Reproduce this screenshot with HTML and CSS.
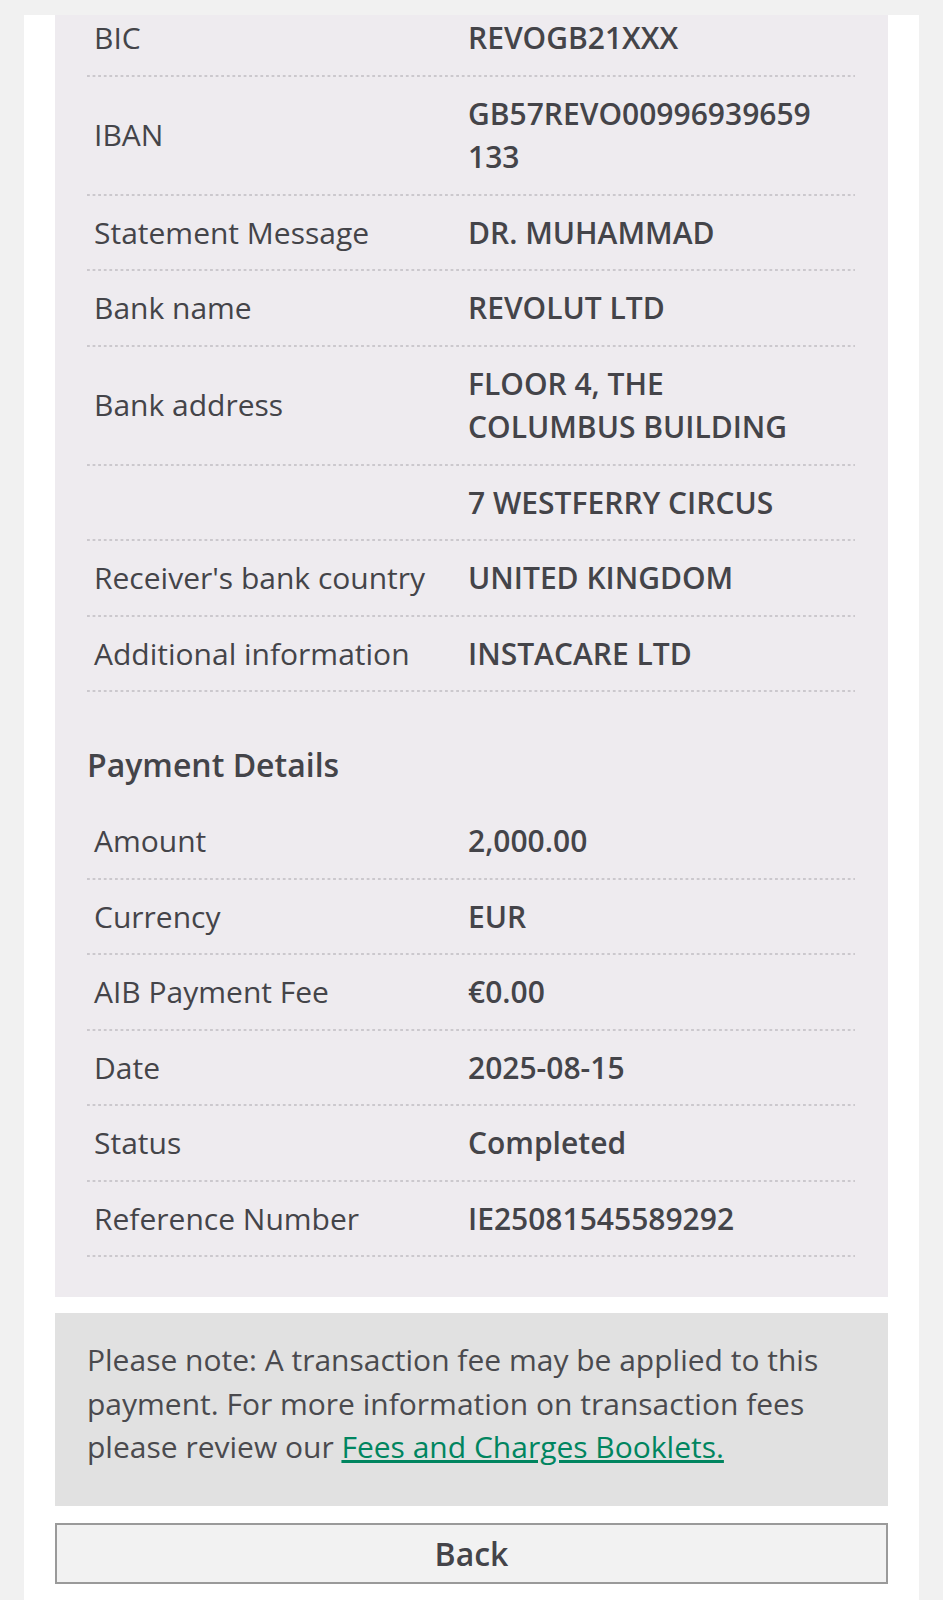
FILE: index.html
```html
<!DOCTYPE html>
<html lang="en">
<head>
<meta charset="utf-8">
<title>Payment Details</title>
<link rel="stylesheet" href="styles.css">
</head>
<body>
<div class="card">
  <section class="panel">
    <div class="list">
      <div class="row"><div class="label">BIC</div><div class="value">REVOGB21XXX</div></div>
      <div class="row"><div class="label">IBAN</div><div class="value break">GB57REVO00996939659133</div></div>
      <div class="row"><div class="label">Statement Message</div><div class="value">DR. MUHAMMAD</div></div>
      <div class="row"><div class="label">Bank name</div><div class="value">REVOLUT LTD</div></div>
      <div class="row"><div class="label">Bank address</div><div class="value">FLOOR 4, THE COLUMBUS BUILDING</div></div>
      <div class="row"><div class="label"></div><div class="value">7 WESTFERRY CIRCUS</div></div>
      <div class="row"><div class="label">Receiver's bank country</div><div class="value">UNITED KINGDOM</div></div>
      <div class="row"><div class="label">Additional information</div><div class="value">INSTACARE LTD</div></div>
    </div>
    <h2 class="heading">Payment Details</h2>
    <div class="list">
      <div class="row"><div class="label">Amount</div><div class="value">2,000.00</div></div>
      <div class="row"><div class="label">Currency</div><div class="value">EUR</div></div>
      <div class="row"><div class="label">AIB Payment Fee</div><div class="value">€0.00</div></div>
      <div class="row"><div class="label">Date</div><div class="value">2025-08-15</div></div>
      <div class="row"><div class="label">Status</div><div class="value">Completed</div></div>
      <div class="row"><div class="label">Reference Number</div><div class="value">IE25081545589292</div></div>
    </div>
  </section>
  <div class="note">Please note: A transaction fee may be applied to this payment. For more information on transaction fees please review our <a href="#" class="link">Fees and Charges Booklets.</a></div>
  <button class="back" type="button">Back</button>
</div>
</body>
</html>
```

FILE: styles.css
```css
html, body {
  margin: 0;
  padding: 0;
}
body {
  background: #f1f1f1;
  font-family: "Open Sans", "Noto Sans", "Liberation Sans", sans-serif;
  color: #444449;
  padding-top: 15px;
}
.card {
  background: #ffffff;
  margin: 0 24px;
  padding: 0 31px 40px;
  display: flex;
  flex-direction: column;
}
.panel {
  background: #eeebef;
  padding: 0 33px 40px 32px;
  overflow: hidden;
}
.panel > .list:first-child {
  margin-top: -14px;
}
.row {
  display: grid;
  grid-template-columns: 374px minmax(0, 1fr);
  align-items: center;
  padding: 15px 0 17px;
  min-height: 43.5px;
  font-size: 30px;
  line-height: 43.5px;
  background-image: linear-gradient(to right, #cbc8cd 50%, transparent 50%);
  background-size: 5.6px 2px;
  background-repeat: repeat-x;
  background-position: left bottom;
}
.label {
  padding-left: 7px;
  font-weight: 400;
}
.value {
  padding: 0 35px 0 7px;
  font-weight: 600;
}
.break {
  word-break: break-all;
}
.heading {
  margin: 51px 0 17px;
  font-size: 32px;
  line-height: 44px;
  font-weight: 600;
}
.note {
  margin-top: 16px;
  background: #e1e1e1;
  padding: 25px 32px 37px;
  font-size: 30px;
  line-height: 43.5px;
  color: #4a4a4e;
}
.link {
  color: #00855f;
  text-decoration: underline;
  text-underline-offset: 2px;
}
.back {
  margin-top: 17px;
  height: 61px;
  border: 2px solid #9a9a9a;
  background: #f2f2f2;
  font-family: inherit;
  font-size: 32px;
  font-weight: 600;
  color: #444449;
  cursor: pointer;
}
```
